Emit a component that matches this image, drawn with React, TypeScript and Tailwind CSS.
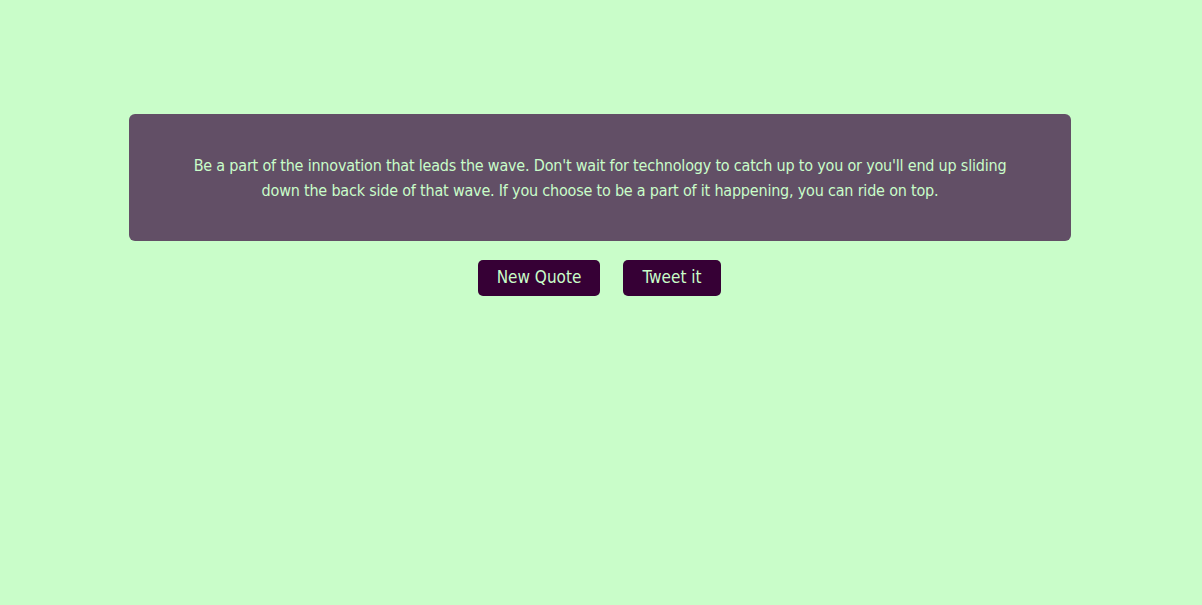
export default function App() {
  return (
    <div
      className="min-h-screen w-full bg-[#c9fdc9] flex flex-col items-center pt-[114px]"
      style={{ fontFamily: '"DejaVu Sans Condensed", "Liberation Sans", sans-serif' }}
    >
      <div className="ml-[-2px] w-[942px] rounded-md bg-[#624f66] px-12 pt-[39px] pb-[38px]">
        <p className="text-center text-[16px] leading-[25px] tracking-[-0.2px] text-[#c9fdc9]">
          Be a part of the innovation that leads the wave. Don't wait for technology to catch up to you or you'll end up sliding
          <br />
          down the back side of that wave. If you choose to be a part of it happening, you can ride on top.
        </p>
      </div>
      <div className="ml-[-3px] mt-[19px] flex gap-[23px]">
        <button className="h-9 w-[122px] rounded-[5px] bg-[#360035] text-[17px] text-[#c9fdc9]">
          New Quote
        </button>
        <button className="h-9 w-[98px] rounded-[5px] bg-[#360035] text-[17px] text-[#c9fdc9]">
          Tweet it
        </button>
      </div>
    </div>
  );
}
